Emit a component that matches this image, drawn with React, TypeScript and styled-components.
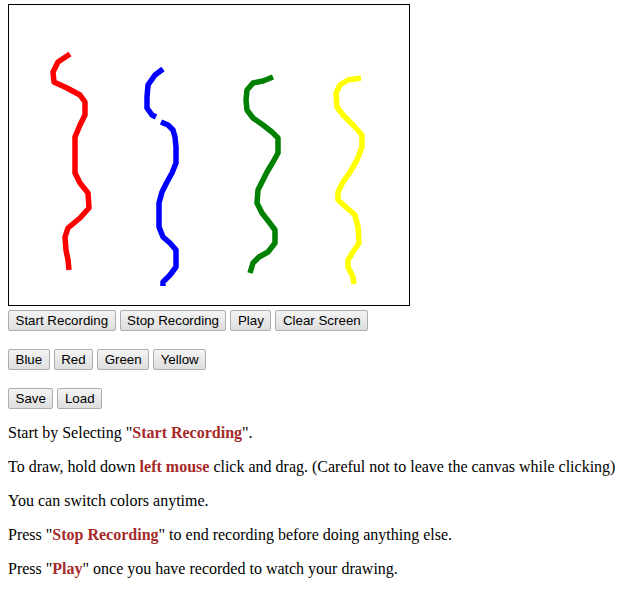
import React from "react";
import styled, { createGlobalStyle } from "styled-components";

const GlobalStyle = createGlobalStyle`
  html, body { background: #ffffff; }
  body {
    margin: 4px 8px 8px 8px;
    font-family: "Liberation Serif", "Times New Roman", serif;
    font-size: 16px;
    color: #000000;
  }
`;

const Page = styled.div`
  display: flex;
  flex-direction: column;
  align-items: flex-start;
`;

const Canvas = styled.div`
  width: 400px;
  height: 300px;
  border: 1px solid #000000;
  background: #ffffff;
`;

const Drawing = styled.svg`
  display: block;
  width: 400px;
  height: 300px;
`;

const ButtonRow = styled.div<{ $top: number }>`
  display: flex;
  gap: 4px;
  margin-top: ${(p) => p.$top}px;
`;

const Button = styled.button`
  font-family: "Liberation Sans", Arial, sans-serif;
  font-size: 13.33px;
  color: #000000;
  height: 21px;
  padding: 0 6.5px;
  border: 1px solid #adadad;
  border-radius: 2px;
  background: linear-gradient(#f4f4f4, #dedede);
  line-height: 19px;
  cursor: pointer;
`;

const Instructions = styled.div`
  margin-top: 15px;
  display: flex;
  flex-direction: column;
  gap: 16px;
`;

const Line = styled.p`
  margin: 0;
  line-height: normal;
  white-space: nowrap;
`;

const Em = styled.b`
  color: #a52a2a;
`;

type Stroke = { color: string; pts: number[][] };

const strokes: Stroke[] = [
  {
    color: "#ff0000",
    pts: [
      [70, 54], [58, 62], [53, 72], [54, 82], [67, 88], [80, 95], [85, 102], [85, 115],
      [80, 125], [75, 137], [75, 173], [80, 183], [88, 193], [89, 208], [80, 218],
      [68, 228], [65, 237], [66, 250], [68, 260], [69, 270],
    ],
  },
  {
    color: "#0000ff",
    pts: [
      [163, 69], [155, 75], [148, 85], [147, 97], [147, 108], [152, 115], [156, 117],
    ],
  },
  {
    color: "#0000ff",
    pts: [
      [161, 122], [168, 125], [173, 130], [175, 137], [176, 147], [176, 163], [172, 173],
      [167, 182], [162, 192], [159, 203], [159, 227], [163, 237], [170, 243], [176, 250],
      [176, 267], [170, 275], [163, 282], [163, 286],
    ],
  },
  {
    color: "#008000",
    pts: [
      [273, 77], [263, 81], [253, 83], [247, 90], [246, 100], [247, 110], [253, 118],
      [263, 125], [272, 132], [278, 138], [278, 153], [273, 162], [267, 172], [262, 182],
      [258, 190], [257, 203], [262, 213], [269, 222], [275, 230], [275, 243], [268, 252],
      [259, 257], [253, 263], [250, 273],
    ],
  },
  {
    color: "#ffff00",
    pts: [
      [361, 78], [348, 80], [340, 85], [336, 93], [337, 107], [343, 115], [353, 125],
      [362, 135], [362, 147], [357, 160], [350, 172], [343, 182], [338, 192], [338, 200],
      [347, 208], [355, 215], [358, 227], [359, 243], [353, 252], [348, 260], [348, 267],
      [353, 277], [354, 284],
    ],
  },
];

export default function App() {
  return (
    <>
      <GlobalStyle />
      <Page>
        <Canvas>
          <Drawing viewBox="9 5 400 300">
            {strokes.map((s, i) => (
              <polyline
                key={i}
                points={s.pts.map((p) => p.join(",")).join(" ")}
                fill="none"
                stroke={s.color}
                strokeWidth={5.5}
                strokeLinejoin="round"
                strokeLinecap="butt"
              />
            ))}
          </Drawing>
        </Canvas>
        <ButtonRow $top={4}>
          <Button>Start Recording</Button>
          <Button>Stop Recording</Button>
          <Button>Play</Button>
          <Button>Clear Screen</Button>
        </ButtonRow>
        <ButtonRow $top={18}>
          <Button>Blue</Button>
          <Button>Red</Button>
          <Button>Green</Button>
          <Button>Yellow</Button>
        </ButtonRow>
        <ButtonRow $top={18}>
          <Button>Save</Button>
          <Button>Load</Button>
        </ButtonRow>
        <Instructions>
          <Line>
            Start by Selecting "<Em>Start Recording</Em>".
          </Line>
          <Line>
            To draw, hold down <Em>left mouse</Em> click and drag. (Careful not to leave the canvas while clicking)
          </Line>
          <Line>You can switch colors anytime.</Line>
          <Line>
            Press "<Em>Stop Recording</Em>" to end recording before doing anything else.
          </Line>
          <Line>
            Press "<Em>Play</Em>" once you have recorded to watch your drawing.
          </Line>
        </Instructions>
      </Page>
    </>
  );
}
